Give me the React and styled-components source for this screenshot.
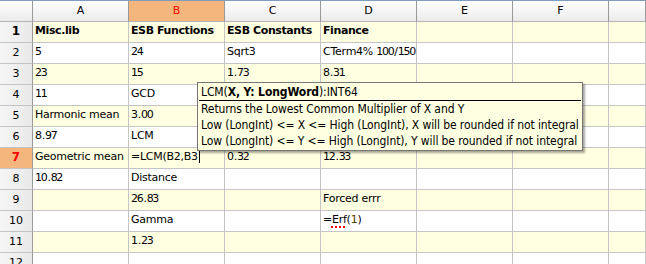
import React from 'react'
import styled, { createGlobalStyle, css } from 'styled-components'

const GlobalStyle = createGlobalStyle`
  html, body {
    margin: 0;
    padding: 0;
    background: #fff;
    overflow: hidden;
  }
  body {
    font-family: "DejaVu Sans", sans-serif;
    font-size: 11px;
    color: #000;
  }
`

const columns = ['A', 'B', 'C', 'D', 'E', 'F', '']
const selectedCol = 'B'
const selectedRow = 7

const rows = [
  ['Misc.lib', 'ESB Functions', 'ESB Constants', 'Finance'],
  ['5', '24', 'Sqrt3', 'CTerm4% 100/150'],
  ['23', '15', '1.73', '8.31'],
  ['11', 'GCD', '', ''],
  ['Harmonic mean', '3.00', '', ''],
  ['8.97', 'LCM', '', ''],
  ['Geometric mean', 'EDIT', '0.32', '12.33'],
  ['10.82', 'Distance', '', ''],
  ['', '26.83', '', 'Forced errr'],
  ['', 'Gamma', '', 'ERF'],
  ['', '1.23', '', ''],
  ['', '', '', ''],
]

// digits in the grid font are a bit narrower than DejaVu's
function CellText({ text }) {
  return text.split(/(\d+)/).map((part, i) =>
    /^\d+$/.test(part) ? <Digits key={i}>{part}</Digits> : part
  )
}

export default function App() {
  return (
    <>
      <GlobalStyle />
      <Sheet>
        <Grid>
          <Corner />
          {columns.map((c, i) => (
            <ColHeader key={i} $selected={c === selectedCol}>{c}</ColHeader>
          ))}
          {rows.map((row, r) => (
            <React.Fragment key={r}>
              <RowHeader $selected={r + 1 === selectedRow} $bold={r === 0}>{r + 1}</RowHeader>
              {columns.map((c, ci) => {
                const value = row[ci] || ''
                return (
                  <Cell key={ci} $odd={r % 2 === 0} $bold={r === 0}>
                    {value === 'EDIT' ? (
                      <>=LCM(B<Digits>2</Digits>,B<Digits>3</Digits><Caret /></>
                    ) : value === 'ERF' ? (
                      <>=<Squiggle>Erf</Squiggle>(<Num>1</Num>)</>
                    ) : <CellText text={value} />}
                  </Cell>
                )
              })}
            </React.Fragment>
          ))}
        </Grid>
        <Hint>
          <HintTitle>LCM(<b>X, Y: LongWord</b>):INT64</HintTitle>
          <HintLine>Returns the Lowest Common Multiplier of X and Y</HintLine>
          <HintLine>Low (LongInt) &lt;= X &lt;= High (LongInt), X will be rounded if not integral</HintLine>
          <HintLine>Low (LongInt) &lt;= Y &lt;= High (LongInt), Y will be rounded if not integral</HintLine>
        </Hint>
      </Sheet>
    </>
  )
}

const Sheet = styled.div`
  position: relative;
  width: 646px;
  height: 264px;
  overflow: hidden;
`

const Grid = styled.div`
  display: grid;
  grid-template-columns: 33px repeat(6, 96px) 1fr;
  grid-auto-rows: 21px;
  grid-template-rows: 22px;
`

const headerBase = css`
  box-sizing: border-box;
  border-top: 1px solid #7f9cc0;
  border-right: 1px solid #9a9a9a;
  border-bottom: 1px solid #b4b4b4;
  background: linear-gradient(#ffffff, #ebebeb);
`

const Corner = styled.div`
  ${headerBase}
`

const ColHeader = styled.div`
  ${headerBase}
  display: flex;
  align-items: center;
  justify-content: center;
  padding-bottom: 2px;
  font-size: 11px;
  ${p => p.$selected && css`
    background: #f5b67e;
    color: #ff0000;
  `}
`

const RowHeader = styled.div`
  box-sizing: border-box;
  border-right: 1px solid #9a9a9a;
  border-bottom: 1px solid #c4c4c4;
  background: linear-gradient(90deg, #f6f6f6, #e9e9e9);
  display: flex;
  align-items: center;
  justify-content: center;
  padding-bottom: 2px;
  font-size: ${p => (p.$bold ? '12px' : '11px')};
  font-weight: ${p => (p.$bold ? 'bold' : 'normal')};
  ${p => p.$selected && css`
    background: #f5b67e;
    color: #ff0000;
    font-weight: bold;
    font-size: 12px;
  `}
`

const Cell = styled.div`
  box-sizing: border-box;
  border-right: 1px solid #c4c4c4;
  border-bottom: 1px solid #c4c4c4;
  background: ${p => (p.$odd ? '#ffffe1' : '#ffffff')};
  padding: 0 2px;
  line-height: 18px;
  white-space: pre;
  overflow: hidden;
  letter-spacing: ${p => (p.$bold ? '-0.4px' : '-0.25px')};
  font-weight: ${p => (p.$bold ? 'bold' : 'normal')};
`

const Digits = styled.span`
  letter-spacing: -1.3px;
  padding-right: 1px;
`

const Caret = styled.span`
  display: inline-block;
  width: 1px;
  height: 14px;
  background: #000;
  margin-left: 1px;
  vertical-align: -3px;
`

const Squiggle = styled.span`
  text-decoration: underline dotted #ff0000;
  text-underline-offset: 3px;
  text-decoration-thickness: 2px;
`

const Num = styled.span`
  color: #5a3a00;
`

const Hint = styled.div`
  position: absolute;
  left: 197px;
  top: 82px;
  width: 386px;
  box-sizing: border-box;
  background: #ffffe1;
  border: 1px solid #767676;
  box-shadow: 2px 2px 2px rgba(0, 0, 0, 0.35);
  padding: 0 1px 1px 1px;
  font-family: "DejaVu Sans Condensed", "DejaVu Sans", sans-serif;
  font-size: 12px;
  line-height: 16px;
  letter-spacing: -0.1px;
`

const HintTitle = styled.div`
  padding: 1px 2px 0;
  border-bottom: 1px solid #000;
  b {
    font-weight: bold;
  }
`

const HintLine = styled.div`
  padding: 0 2px;
  white-space: nowrap;
`
